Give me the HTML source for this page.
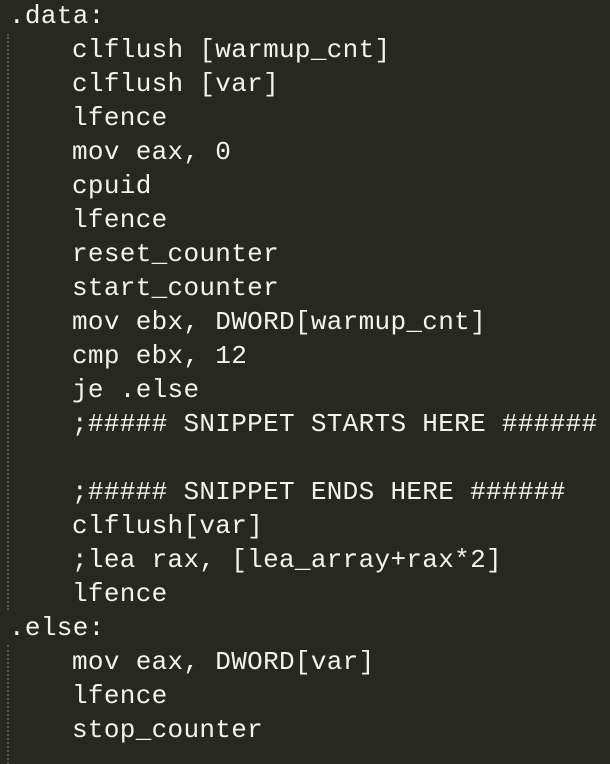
<html><head><style>
body{margin:0;width:610px;height:764px;background:#272822;overflow:hidden;position:relative}
.c{position:absolute;left:9px;top:-1px;font-family:"Liberation Mono",monospace;font-size:26px;letter-spacing:0.32px;line-height:34px;color:#f3f3ee}
.c div{height:34px;white-space:pre}
.i{padding-left:63px}
.g{position:absolute;left:7px;width:0;border-left:2px dotted #55554f}
</style></head><body>
<div class="g" style="top:34px;height:576px"></div>
<div class="g" style="top:645px;height:119px"></div>
<div class="c"><div>.data:</div><div class="i">clflush [warmup_cnt]</div><div class="i">clflush [var]</div><div class="i">lfence</div><div class="i">mov eax, 0</div><div class="i">cpuid</div><div class="i">lfence</div><div class="i">reset_counter</div><div class="i">start_counter</div><div class="i">mov ebx, DWORD[warmup_cnt]</div><div class="i">cmp ebx, 12</div><div class="i">je .else</div><div class="i">;##### SNIPPET STARTS HERE ######</div><div class="i"> </div><div class="i">;##### SNIPPET ENDS HERE ######</div><div class="i">clflush[var]</div><div class="i">;lea rax, [lea_array+rax*2]</div><div class="i">lfence</div><div>.else:</div><div class="i">mov eax, DWORD[var]</div><div class="i">lfence</div><div class="i">stop_counter</div></div>
</body></html>
